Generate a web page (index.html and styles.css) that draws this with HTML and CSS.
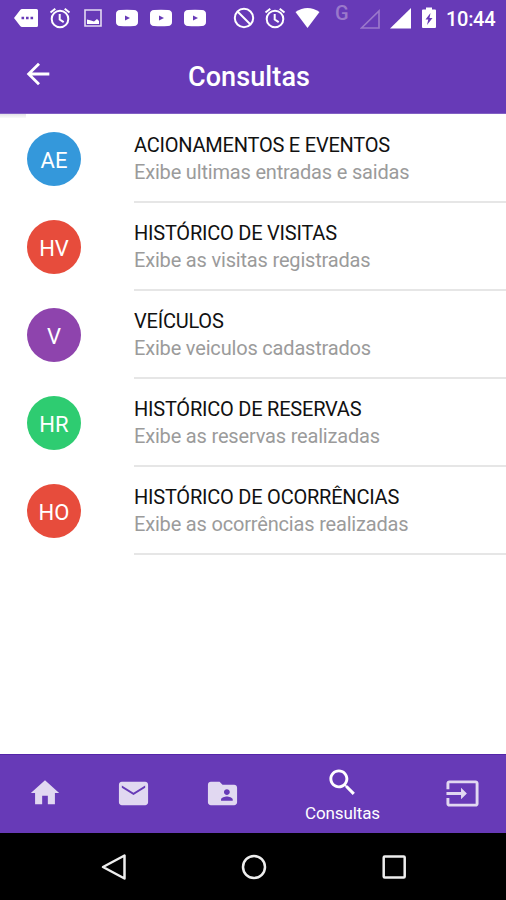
FILE: index.html
```html
<!DOCTYPE html>
<html lang="pt-BR">
<head>
    <meta charset="UTF-8">
    <meta name="viewport" content="width=device-width, initial-scale=1.0">
    <title>Consultas</title>
    <link rel="stylesheet" href="styles.css">
</head>
<body>

<header class="header">
    <div class="status-bar">
        <div class="notifications">
            <svg width="24" height="36" viewBox="0 0 24 36"><path fill="#fff" fill-rule="evenodd" d="M8 9h14.500q1.500 0 1.500 1.500v15q0 1.500-1.500 1.500H8q-1 0-1.800-1L0 18l6.200-8Q7 9 8 9zM7.500 16.700v2.600h2.600v-2.600zM12 16.700v2.600h2.600v-2.600zM16.500 16.700v2.600h2.600v-2.600z"/></svg>
            <svg class="alarm" width="22" height="36" viewBox="0 0 22 36"><g fill="none" stroke="#fff" stroke-width="2"><circle cx="11" cy="19" r="8.300"/><path d="M10.700 14v5.500l4 2.700M1.500 12.500l4.800-3.800M20.500 12.500l-4.800-3.800"/></g></svg>
            <svg class="image" width="18" height="36" viewBox="0 0 18 36"><path fill="none" stroke="#e4daf2" stroke-width="1.600" d="M1 10h16v16H1z"/><path fill="#fff" d="M3 19.500l4 1 3 1 3-2.500 2 2v3H3z"/></svg>
            <svg class="video" width="22" height="36" viewBox="0 0 22 36"><path fill="#fff" fill-rule="evenodd" d="M4 10q7-.6 14 0 4 .3 4 4v8q0 3.700-4 4-7 .6-14 0-4-.3-4-4v-8q0-3.700 4-4zM9 15.500v5l5-2.500z"/></svg>
            <svg class="video" width="22" height="36" viewBox="0 0 22 36"><path fill="#fff" fill-rule="evenodd" d="M4 10q7-.6 14 0 4 .3 4 4v8q0 3.700-4 4-7 .6-14 0-4-.3-4-4v-8q0-3.700 4-4zM9 15.500v5l5-2.500z"/></svg>
            <svg class="video" width="22" height="36" viewBox="0 0 22 36"><path fill="#fff" fill-rule="evenodd" d="M4 10q7-.6 14 0 4 .3 4 4v8q0 3.700-4 4-7 .6-14 0-4-.3-4-4v-8q0-3.700 4-4zM9 15.500v5l5-2.500z"/></svg>
        </div>
        <div class="system">
            <svg width="22" height="36" viewBox="0 0 22 36"><g fill="none" stroke="#fff" stroke-width="2"><circle cx="11" cy="18" r="9.200"/><path d="M4.500 11.500l13 13"/></g></svg>
            <svg class="alarm-set" width="22" height="36" viewBox="0 0 22 36"><g fill="none" stroke="#fff" stroke-width="2"><circle cx="11" cy="19" r="8.300"/><path d="M10.700 14v5.500l4 2.700M1.500 12.500l4.800-3.800M20.500 12.500l-4.800-3.800"/></g></svg>
            <svg class="wifi" width="25" height="36" viewBox="0 0 25 36"><path fill="#fff" d="M.5 12Q12.500 4 24.500 12L12.500 28z"/></svg>
            <span class="network">G</span>
            <svg class="signal" width="22" height="36" viewBox="0 0 22 36"><path fill="none" stroke="#9a78cb" stroke-width="1.700" d="M1.500 28L19 11v17z"/></svg>
            <svg class="signal-full" width="22" height="36" viewBox="0 0 22 36"><path fill="#fff" d="M0 28.500L21 8v20.500z"/></svg>
            <svg class="battery" width="14" height="36" viewBox="0 0 14 36"><path fill="#fff" fill-rule="evenodd" d="M4 7.500h6v2h3q1 0 1 1V27q0 1-1 1H1q-1 0-1-1V10.500q0-1 1-1h3zM8.500 13L3.500 19.500h2.800L5 25l5.500-7H7.500z"/></svg>
            <span class="clock">10:44</span>
        </div>
    </div>
    <div class="app-bar">
        <svg class="back" width="34" height="34" viewBox="0 0 24 24"><path fill="#fff" d="M20 11H7.830l5.590-5.590L12 4l-8 8 8 8 1.410-1.410L7.830 13H20v-2z"/></svg>
        <h1>Consultas</h1>
    </div>
</header>

<main class="content">
    <div class="shade"></div>
    <ul class="list">
        <li class="item">
            <div class="avatar blue">AE</div>
            <div class="text">
                <h2>ACIONAMENTOS E EVENTOS</h2>
                <p>Exibe ultimas entradas e saidas</p>
            </div>
        </li>
        <li class="item">
            <div class="avatar red">HV</div>
            <div class="text">
                <h2>HISTÓRICO DE VISITAS</h2>
                <p>Exibe as visitas registradas</p>
            </div>
        </li>
        <li class="item">
            <div class="avatar purple">V</div>
            <div class="text">
                <h2>VEÍCULOS</h2>
                <p>Exibe veiculos cadastrados</p>
            </div>
        </li>
        <li class="item">
            <div class="avatar green">HR</div>
            <div class="text">
                <h2>HISTÓRICO DE RESERVAS</h2>
                <p>Exibe as reservas realizadas</p>
            </div>
        </li>
        <li class="item">
            <div class="avatar red">HO</div>
            <div class="text">
                <h2>HISTÓRICO DE OCORRÊNCIAS</h2>
                <p>Exibe as ocorrências realizadas</p>
            </div>
        </li>
    </ul>
</main>

<nav class="tabs">
    <a class="tab"><svg width="34" height="34" viewBox="0 0 24 24"><path d="M10 20v-6h4v6h5v-8h3L12 3 2 12h3v8z"/></svg></a>
    <a class="tab"><svg width="35" height="35" viewBox="0 0 24 24"><path d="M20 4H4c-1.100 0-1.990.9-1.990 2L2 18c0 1.100.9 2 2 2h16c1.100 0 2-.9 2-2V6c0-1.100-.9-2-2-2zm0 4l-8 5-8-5V6.500l8 5 8-5z"/></svg></a>
    <a class="tab"><svg width="35" height="35" viewBox="0 0 24 24"><path d="M20 6h-8l-2-2H4c-1.100 0-1.990.9-1.990 2L2 18c0 1.100.9 2 2 2h16c1.100 0 2-.9 2-2V8c0-1.100-.9-2-2-2zm-5 3c1.100 0 2 .9 2 2s-.9 2-2 2-2-.9-2-2 .9-2 2-2zm4 8h-8v-1c0-1.330 2.670-2 4-2s4 .67 4 2v1z"/></svg></a>
    <a class="tab active">
        <svg width="35" height="35" viewBox="0 0 24 24"><path d="M15.500 14h-.79l-.28-.27C15.410 12.590 16 11.110 16 9.500 16 5.910 13.090 3 9.500 3S3 5.910 3 9.500 5.910 16 9.500 16c1.610 0 3.090-.59 4.230-1.570l.27.28v.79l5 4.990L20.490 19l-4.990-5zm-6 0C7.010 14 5 11.990 5 9.500S7.010 5 9.500 5 14 7.010 14 9.500 11.990 14 9.500 14z"/></svg>
        <span>Consultas</span>
    </a>
    <a class="tab"><svg width="35" height="35" viewBox="0 0 24 24"><path d="M21 3.010H3c-1.100 0-2 .9-2 2V9h2V4.990h18v14.030H3V15H1v4.010c0 1.100.9 1.980 2 1.980h18c1.100 0 2-.88 2-1.980v-14c0-1.110-.9-2-2-2zM11 16l4-4-4-4v3H1v2h10v3z"/></svg></a>
</nav>

<div class="android-nav">
    <svg width="28" height="30" viewBox="0 0 28 30"><path d="M3 15L24.500 3.500v23z"/></svg>
    <svg width="28" height="30" viewBox="0 0 28 30"><circle cx="14" cy="15" r="11"/></svg>
    <svg width="28" height="30" viewBox="0 0 28 30"><rect x="3.700" y="4.500" width="21" height="21" rx="1"/></svg>
</div>

</body>
</html>
```
FILE: styles.css
```css
* {
    box-sizing: border-box;
}
body {
    margin: 0;
    height: 900px;
    display: flex;
    flex-direction: column;
    overflow: hidden;
    font-family: Roboto, sans-serif;
    background-color: #fff;
    color: #111;
}
svg {
    display: block;
    flex: none;
}
h1, h2, p, ul {
    margin: 0;
    padding: 0;
}
.header {
    height: 114px;
    background-color: #673ab7;
    border-bottom: 1px solid #8260c4;
    color: #fff;
}
.status-bar {
    display: flex;
    justify-content: space-between;
    height: 36px;
    padding: 0 10px 0 14px;
}
.notifications, .system {
    display: flex;
}
.alarm {
    margin-left: 11px;
}
.image {
    margin-left: 13px;
}
.video {
    margin-left: 12px;
}
.image + .video {
    margin-left: 14px;
}
.alarm-set {
    margin-left: 9px;
}
.wifi {
    margin-left: 9px;
}
.network {
    width: 14px;
    margin-left: 15px;
    font-size: 20px;
    font-weight: 500;
    line-height: 27px;
    color: #9a78cb;
}
.signal {
    margin-left: 11px;
}
.signal-full {
    margin-left: 8px;
}
.battery {
    margin-left: 10px;
}
.clock {
    width: 50px;
    margin-left: 10px;
    font-size: 20px;
    font-weight: 500;
    line-height: 38px;
    letter-spacing: -0.3px;
    white-space: nowrap;
}
.app-bar {
    display: flex;
    align-items: center;
    height: 77px;
    padding: 0 22px 2px 21px;
}
.app-bar h1 {
    flex: 1;
    padding-right: 41px;
    padding-top: 6px;
    font-size: 27px;
    font-weight: 500;
    letter-spacing: 0.1px;
    text-align: center;
}
.content {
    position: relative;
    flex: 1;
}
.shade {
    position: absolute;
    top: 0;
    left: 0;
    width: 26px;
    height: 4px;
    background: linear-gradient(#e4e2e8, #fafafa);
}
.list {
    padding-top: 1px;
    list-style: none;
}
.item {
    display: flex;
    height: 88px;
    padding-left: 27px;
}
.avatar {
    width: 54px;
    height: 54px;
    margin-top: 17px;
    border-radius: 50%;
    font-size: 22px;
    line-height: 57px;
    text-align: center;
    color: #fff;
}
.blue {
    background-color: #3498db;
}
.red {
    background-color: #e74c3c;
}
.purple {
    background-color: #8e44ad;
}
.green {
    background-color: #2ecc71;
}
.text {
    flex: 1;
    margin-left: 53px;
    padding-top: 17px;
    border-bottom: 2px solid #e6e6e6;
    white-space: nowrap;
}
.text h2 {
    font-size: 20px;
    font-weight: 400;
    line-height: 27px;
    letter-spacing: -0.22px;
}
.text p {
    font-size: 20px;
    line-height: 27px;
    letter-spacing: -0.18px;
    color: #9b9b9b;
}
.tabs {
    display: flex;
    height: 79px;
    padding-left: 1px;
    background-color: #673ab7;
    border-top: 1px solid #5425a8;
}
.tab {
    display: flex;
    flex: none;
    flex-direction: column;
    align-items: center;
    width: 88.5px;
    padding-top: 21px;
    color: #e1d8f1;
}
.tab svg {
    fill: currentColor;
}
.active {
    width: 152px;
    padding-top: 10px;
    color: #fff;
}
.active span {
    font-size: 17px;
    line-height: 26px;
    letter-spacing: -0.1px;
}
.android-nav {
    display: flex;
    justify-content: center;
    gap: 112px;
    height: 67px;
    padding: 19px 0 0 1px;
    background-color: #000;
}
.android-nav svg {
    fill: none;
    stroke: #eee;
    stroke-width: 2.5;
    stroke-linejoin: round;
}
```
